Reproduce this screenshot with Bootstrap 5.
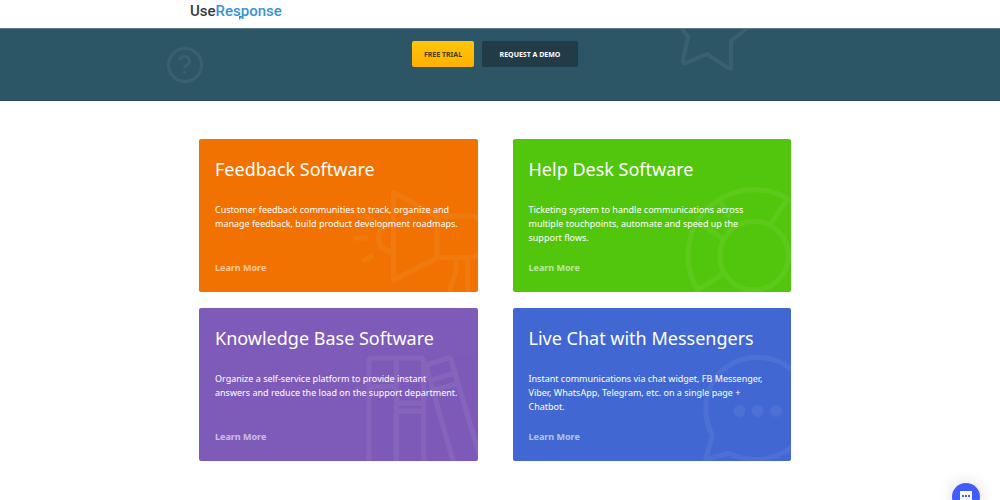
<!DOCTYPE html>
<html lang="en">
<head>
<meta charset="utf-8">
<meta name="viewport" content="width=device-width, initial-scale=1">
<title>UseResponse</title>
<link href="https://cdn.jsdelivr.net/npm/bootstrap@5.3.0/dist/css/bootstrap.min.css" rel="stylesheet">
<style>
  body { font-family: "Noto Sans", "Open Sans", sans-serif; font-size: 9px; line-height: 14px; background: #fff; }
  .gutter { padding-right: 10px; }
  .wrap { max-width: 610px; }
  .topbar { height: 28px; }
  .brand { font: 500 15px/22px Roboto, sans-serif; color: #333b40; }
  .brand span { color: #3992d8; }
  .brand svg { left: 48px; top: 16px; }
  .hero { background: #2c5666; height: 73px; border-top: 1px solid #597a86; border-bottom: 1px solid #234b5b; padding-top: 12px; }
  .hero .deco { fill: none; stroke: #386071; }
  .deco-help { left: -24px; top: 5px; }
  .deco-star { left: 485px; top: -13px; }
  .hero .btn { font-size: 7px; line-height: 13px; font-weight: 700; height: 26px; border: 0; border-radius: 2px; padding: 0; }
  .btn-trial, .btn-trial:hover { width: 62px; background: linear-gradient(#ffc60a, #ffb000); color: #4a3c10; }
  .btn-demo, .btn-demo:hover { width: 96px; background: #213c47; color: #fff; }
  .products { padding: 38px 9px; }
  .grid-cards { display: grid; grid-template-columns: repeat(auto-fit, minmax(260px, 1fr)); gap: 16px 35px; }
  .product { min-height: 153px; border-radius: 2px; padding: 16px; color: #fff; }
  .product h2 { font-size: 18px; line-height: 28px; font-weight: 400; margin: 0 0 20px; }
  .product p { margin: 0; min-height: 42px; }
  .product a { margin-top: 16px; color: #fff; opacity: .6; font-weight: 700; text-decoration: none; }
  .product svg { fill: none; stroke: #fff; stroke-width: 15; stroke-linejoin: round; opacity: .06; }
  .feedback { background: #f17200; }
  .helpdesk { background: #52c60d; }
  .knowledge { background: #7e5bb8; }
  .livechat { background: #4168d2; }
  .chat-btn { width: 28px; height: 28px; right: 20px; bottom: -11px; background: #405cff; box-shadow: 0 0 16px rgba(0,0,0,.15); }
</style>
</head>
<body>
<header class="topbar gutter">
  <div class="wrap mx-auto"><a class="brand d-inline-block position-relative text-decoration-none" href="#">Use<span>Response</span><svg class="position-absolute" width="6" height="5" viewBox="0 0 6 5" aria-hidden="true"><path d="M1 0h4L1 4z" fill="#3992d8"/></svg></a></div>
</header>
<section class="hero gutter overflow-hidden">
  <div class="wrap mx-auto position-relative">
    <svg class="deco deco-help position-absolute" width="38" height="38" viewBox="0 0 38 38" aria-hidden="true"><circle cx="19" cy="19" r="16.5" stroke-width="3"/><path d="M13.500 14.500q1-4 5-4 5 0 5 4.500 0 3-3.500 4.500-1.500.8-1.500 3" stroke-width="3"/><circle cx="18.500" cy="26.500" r="1" stroke-width="1.500"/></svg>
    <svg class="deco deco-star position-absolute" width="90" height="50" viewBox="0 0 90 50" aria-hidden="true"><path d="M4-3 13 9 8 32Q7 36 11 35L32 26 53 40Q57 42 56 37V13L76-3" stroke-width="4" stroke-linejoin="round"/></svg>
    <div class="d-flex justify-content-center gap-2 position-relative">
      <button type="button" class="btn btn-trial">FREE TRIAL</button>
      <button type="button" class="btn btn-demo">REQUEST A DEMO</button>
    </div>
  </div>
</section>
<main class="gutter">
  <div class="wrap mx-auto products">
    <div class="grid-cards">
      <article class="product feedback position-relative overflow-hidden d-flex flex-column align-items-start">
        <svg class="position-absolute bottom-0 end-0" width="142" height="152" viewBox="2 27 426 456" aria-hidden="true"><path d="M175 185V448L305 380V255ZM305 255H400Q440 255 440 290V345Q440 380 400 380H305M170 279Q130 286 130 322T170 362M55 321H98M82 390 114 373M85 254 114 270M362 385V410C362 450 344 440 344 490M397 385V490"/></svg>
        <h2 class="position-relative">Feedback Software</h2>
        <p class="position-relative">Customer feedback communities to track, organize and<br>manage feedback, build product development roadmaps.</p>
        <a class="position-relative" href="#">Learn More</a>
      </article>
      <article class="product helpdesk position-relative overflow-hidden d-flex flex-column align-items-start">
        <svg class="position-absolute bottom-0 end-0" width="142" height="152" viewBox="-4 27 426 456" aria-hidden="true"><circle cx="311" cy="374" r="198"/><circle cx="311" cy="374" r="103"/><path d="M208 208 238 258M144 278 220 322M411 205 363 276M143 477 216 430"/></svg>
        <h2 class="position-relative">Help Desk Software</h2>
        <p class="position-relative">Ticketing system to handle communications across<br>multiple touchpoints, automate and speed up the<br>support flows.</p>
        <a class="position-relative" href="#">Learn More</a>
      </article>
      <article class="product knowledge position-relative overflow-hidden d-flex flex-column align-items-start">
        <svg class="position-absolute bottom-0 end-0" width="142" height="152" viewBox="2 23 426 456" aria-hidden="true"><path d="M101 490V180Q101 170 111 170H255Q265 170 265 180V490M183 170V490M101 234H183M101 256H183M183 306H265M183 330H265M355 485 274 202Q271 191 281 188L335 171Q345 168 348 178L435 470M281 239 354 216M289 268 362 248"/></svg>
        <h2 class="position-relative">Knowledge Base Software</h2>
        <p class="position-relative">Organize a self-service platform to provide instant<br>answers and reduce the load on the support department.</p>
        <a class="position-relative" href="#">Learn More</a>
      </article>
      <article class="product livechat position-relative overflow-hidden d-flex flex-column align-items-start">
        <svg class="position-absolute bottom-0 end-0" width="142" height="152" viewBox="-4 23 426 456" aria-hidden="true"><path d="M186 403C130 290 200 168 322 168C410 168 480 240 480 320C480 440 350 510 234 456L166 474Z"/><path d="M267 329h.1M322 329h.1M377 329h.1" stroke-width="36" stroke-linecap="round"/></svg>
        <h2 class="position-relative">Live Chat with Messengers</h2>
        <p class="position-relative">Instant communications via chat widget, FB Messenger,<br>Viber, WhatsApp, Telegram, etc. on a single page +<br>Chatbot.</p>
        <a class="position-relative" href="#">Learn More</a>
      </article>
    </div>
  </div>
</main>
<button type="button" class="chat-btn position-fixed border-0 rounded-circle p-0 d-flex justify-content-center" aria-label="Open chat"><svg width="14" height="22" viewBox="0 0 14 22" aria-hidden="true"><path d="M1 8h12v11l-3-2H1z" fill="#fff"/><path d="M3 12h2v2H3zm3 0h2v2H6zm3 0h2v2H9z" fill="#405cff"/></svg></button>
<script src="https://cdn.jsdelivr.net/npm/bootstrap@5.3.0/dist/js/bootstrap.bundle.min.js"></script>
</body>
</html>
